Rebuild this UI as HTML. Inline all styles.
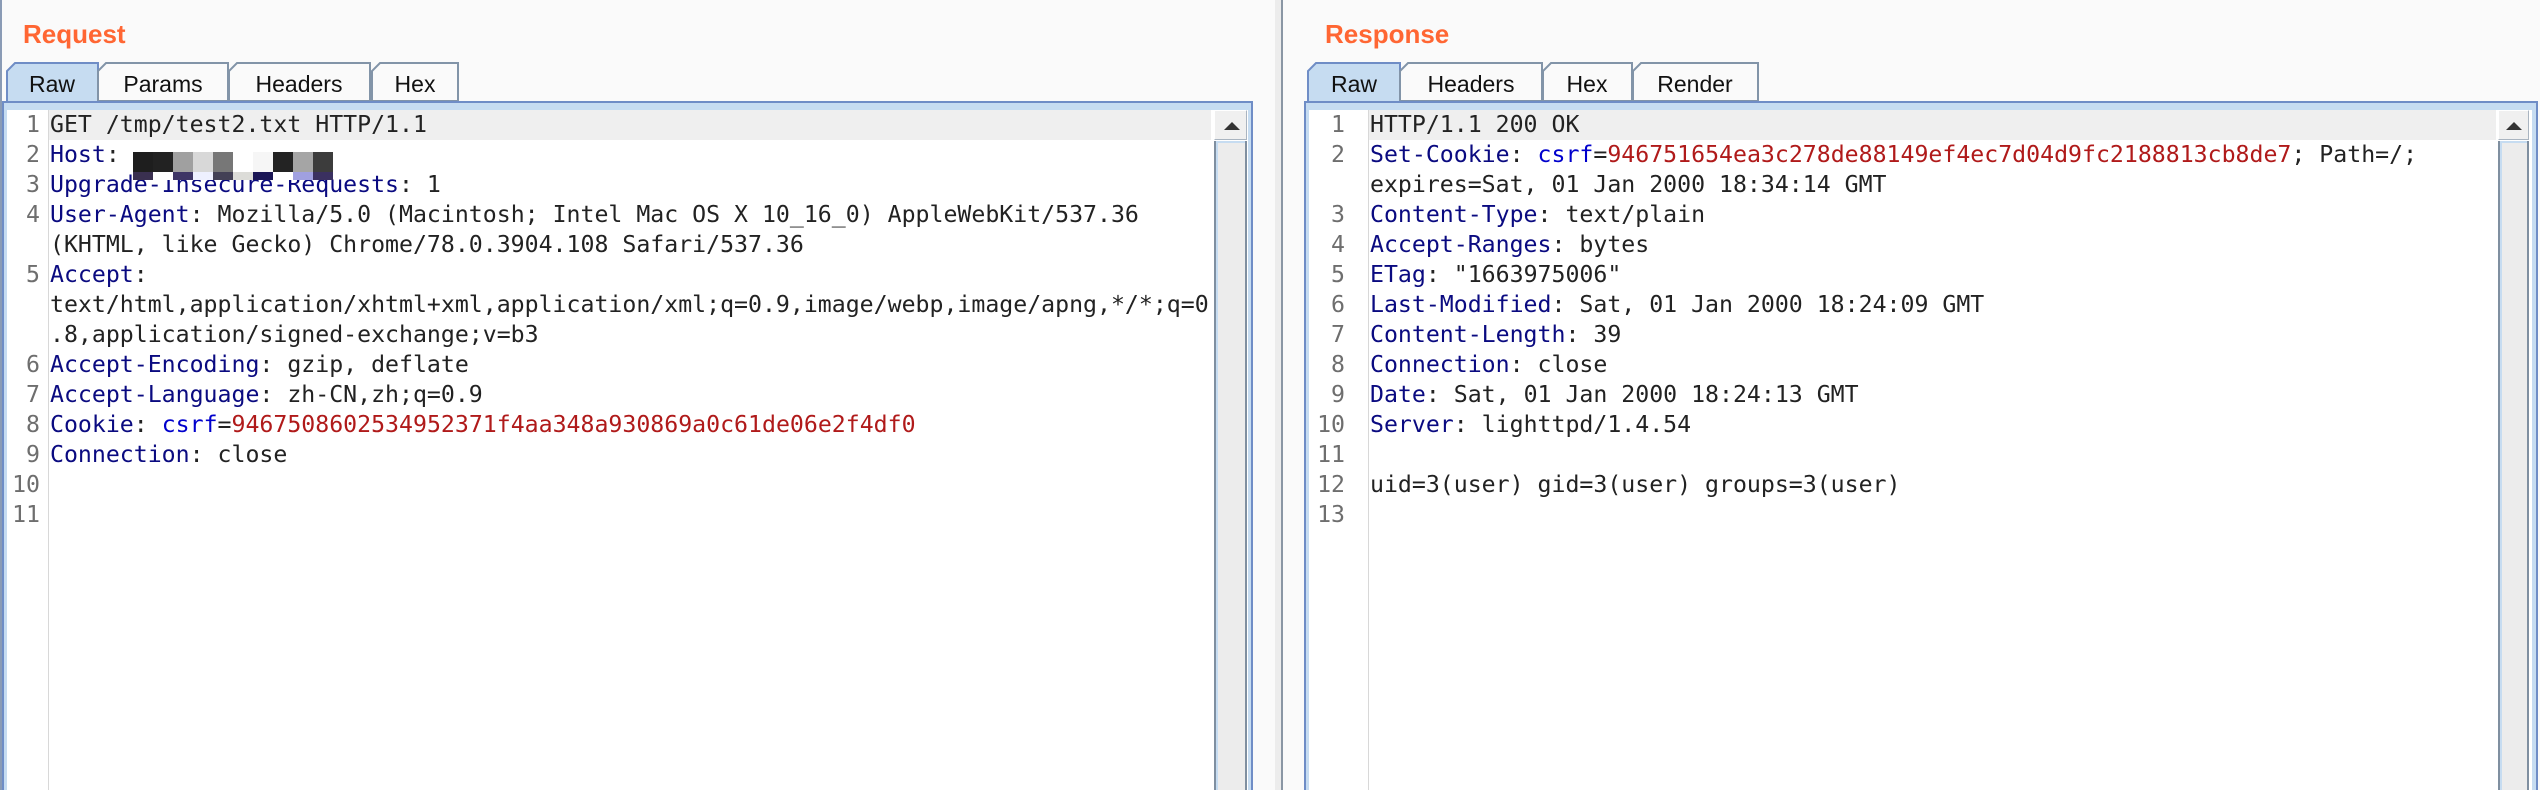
<!DOCTYPE html>
<html style="width:2540px;height:790px;overflow:hidden"><head><meta charset="utf-8">
<style>
*{margin:0;padding:0;box-sizing:border-box}
html,body{width:2540px;height:790px;overflow:hidden}
body{background:#fafafa;position:relative;font-family:"Liberation Sans",sans-serif}
.title{position:absolute;top:18px;font-weight:bold;font-size:26px;color:#ff6633;line-height:32px}
.tabs{position:absolute;left:0;top:0}
.tabt{font-family:"Liberation Sans",sans-serif;font-size:23px;fill:#111}
.panel{position:absolute;top:101px;height:689px;border:2px solid #6f8dc6;border-bottom:none;background:#c6dcf1;overflow:hidden}
.ed{position:absolute;top:7px;left:3px;bottom:0;background:#fff;overflow:hidden}
.gut{position:absolute;top:0;bottom:0;border-right:1px solid #d8d8d8}
.row{position:absolute;left:0;right:0;height:30px;line-height:30px;font-family:"DejaVu Sans Mono","Liberation Mono",monospace;font-size:23.2px;white-space:pre;color:#222}
.n{position:absolute;text-align:right;color:#6e6e6e}
.t{position:absolute}
.k{color:#0a0a80}.b{color:#0000cc}.r{color:#b01a1a}
.hl{background:#efefef}
.sb{position:absolute;top:0;bottom:0;width:33px}
.sb .up{position:absolute;left:0;top:0;width:33px;height:30px;background:#f0f0f0;border:1px solid #a9b4c0;border-top-color:#fff;border-left-color:#fff}
.sb .tri{position:absolute;left:9px;top:11px;width:0;height:0;border-left:8px solid transparent;border-right:8px solid transparent;border-bottom:8px solid #333}
.sb .tr{position:absolute;left:0;top:31px;bottom:0;width:33px;background:#ececec;border-left:2px solid #7f8fa0;border-right:2px solid #7f8fa0;box-shadow:inset 2px 2px 0 #c6dcf1}
</style></head><body>
<div style="position:absolute;left:0;top:0;width:2px;height:790px;background:#8a9bb5"></div>
<div style="position:absolute;left:1275px;top:0;width:6px;height:790px;background:#ececec"></div>
<div style="position:absolute;left:1281px;top:0;width:2px;height:790px;background:#8a96a4"></div>

<div class="title" style="left:23px">Request</div>
<div class="title" style="left:1325px">Response</div>

<svg class="tabs" width="2540" height="112">
<polygon points="7,111 7,71 15,63 98,63 98,111" fill="#c6dcf1" stroke="#6f8dc6" stroke-width="2"/>
<polygon points="98,101 98,71 106,63 228,63 228,101" fill="#fafafa" stroke="#8294a8" stroke-width="2"/>
<polygon points="229,101 229,71 237,63 370,63 370,101" fill="#fafafa" stroke="#8294a8" stroke-width="2"/>
<polygon points="372,101 372,71 380,63 458,63 458,101" fill="#fafafa" stroke="#8294a8" stroke-width="2"/>
<text class="tabt" x="52" y="92" text-anchor="middle">Raw</text>
<text class="tabt" x="163" y="92" text-anchor="middle">Params</text>
<text class="tabt" x="299" y="92" text-anchor="middle">Headers</text>
<text class="tabt" x="415" y="92" text-anchor="middle">Hex</text>

<polygon points="1308,111 1308,71 1316,63 1400,63 1400,111" fill="#c6dcf1" stroke="#6f8dc6" stroke-width="2"/>
<polygon points="1400,101 1400,71 1408,63 1542,63 1542,101" fill="#fafafa" stroke="#8294a8" stroke-width="2"/>
<polygon points="1543,101 1543,71 1551,63 1632,63 1632,101" fill="#fafafa" stroke="#8294a8" stroke-width="2"/>
<polygon points="1633,101 1633,71 1641,63 1758,63 1758,101" fill="#fafafa" stroke="#8294a8" stroke-width="2"/>
<text class="tabt" x="1354" y="92" text-anchor="middle">Raw</text>
<text class="tabt" x="1471" y="92" text-anchor="middle">Headers</text>
<text class="tabt" x="1587" y="92" text-anchor="middle">Hex</text>
<text class="tabt" x="1695" y="92" text-anchor="middle">Render</text>
</svg>

<div class="panel" style="left:2px;width:1251px">
 <div class="ed" style="right:3px">
  <div class="gut" style="left:0;width:42px"></div>
  <div class="row hl" style="top:0;left:42px;right:37px"></div>
  <div class="row" style="top:0"><span class="n" style="left:0;width:33px">1</span><span class="t" style="left:43px">GET /tmp/test2.txt HTTP/1.1</span></div>
  <div class="row" style="top:30px"><span class="n" style="left:0;width:33px">2</span><span class="t" style="left:43px"><span class="k">Host</span>:</span></div>
  <div class="row" style="top:60px"><span class="n" style="left:0;width:33px">3</span><span class="t" style="left:43px"><span class="k">Upgrade-Insecure-Requests</span>: 1</span></div>
  <div class="row" style="top:90px"><span class="n" style="left:0;width:33px">4</span><span class="t" style="left:43px"><span class="k">User-Agent</span>: Mozilla/5.0 (Macintosh; Intel Mac OS X 10_16_0) AppleWebKit/537.36</span></div>
  <div class="row" style="top:120px"><span class="t" style="left:43px">(KHTML, like Gecko) Chrome/78.0.3904.108 Safari/537.36</span></div>
  <div class="row" style="top:150px"><span class="n" style="left:0;width:33px">5</span><span class="t" style="left:43px"><span class="k">Accept</span>:</span></div>
  <div class="row" style="top:180px"><span class="t" style="left:43px">text/html,application/xhtml+xml,application/xml;q=0.9,image/webp,image/apng,*/*;q=0</span></div>
  <div class="row" style="top:210px"><span class="t" style="left:43px">.8,application/signed-exchange;v=b3</span></div>
  <div class="row" style="top:240px"><span class="n" style="left:0;width:33px">6</span><span class="t" style="left:43px"><span class="k">Accept-Encoding</span>: gzip, deflate</span></div>
  <div class="row" style="top:270px"><span class="n" style="left:0;width:33px">7</span><span class="t" style="left:43px"><span class="k">Accept-Language</span>: zh-CN,zh;q=0.9</span></div>
  <div class="row" style="top:300px"><span class="n" style="left:0;width:33px">8</span><span class="t" style="left:43px"><span class="k">Cookie</span>: <span class="b">csrf</span>=<span class="r">9467508602534952371f4aa348a930869a0c61de06e2f4df0</span></span></div>
  <div class="row" style="top:330px"><span class="n" style="left:0;width:33px">9</span><span class="t" style="left:43px"><span class="k">Connection</span>: close</span></div>
  <div class="row" style="top:360px"><span class="n" style="left:0;width:33px">10</span></div>
  <div class="row" style="top:390px"><span class="n" style="left:0;width:33px">11</span></div>
  <div style="position:absolute;top:42px;left:126px;height:20px;width:200px;display:flex">
   <i style="flex:1;background:#1e1e1e"></i><i style="flex:1;background:#222"></i><i style="flex:1;background:#a0a0a0"></i><i style="flex:1;background:#d8d8d8"></i><i style="flex:1;background:#777"></i><i style="flex:1;background:#fff"></i><i style="flex:1;background:#f6f6f6"></i><i style="flex:1;background:#232323"></i><i style="flex:1;background:#a5a5a5"></i><i style="flex:1;background:#3c3c3c"></i>
  </div>
  <div style="position:absolute;top:62px;left:126px;height:8px;width:200px;display:flex">
   <i style="flex:1;background:#3a3050"></i><i style="flex:1;background:#fff"></i><i style="flex:1;background:#3e3565"></i><i style="flex:1;background:#eef0ff"></i><i style="flex:1;background:#434055"></i><i style="flex:1;background:#dcdcd8"></i><i style="flex:1;background:#1a1555"></i><i style="flex:1;background:#fff"></i><i style="flex:1;background:#a0a0e0"></i><i style="flex:1;background:#3a3060"></i>
  </div>
  <div class="sb" style="left:1207px"><div class="up"><div class="tri"></div></div><div class="tr"></div></div>
 </div>
</div>

<div class="panel" style="left:1304px;width:1234px">
 <div class="ed" style="right:4px">
  <div class="gut" style="left:0;width:60px"></div>
  <div class="row hl" style="top:0;left:60px;right:36px"></div>
  <div class="row" style="top:0"><span class="n" style="left:0;width:36px">1</span><span class="t" style="left:61px">HTTP/1.1 200 OK</span></div>
  <div class="row" style="top:30px"><span class="n" style="left:0;width:36px">2</span><span class="t" style="left:61px"><span class="k">Set-Cookie</span>: <span class="b">csrf</span>=<span class="r">946751654ea3c278de88149ef4ec7d04d9fc2188813cb8de7</span>; Path=/;</span></div>
  <div class="row" style="top:60px"><span class="t" style="left:61px">expires=Sat, 01 Jan 2000 18:34:14 GMT</span></div>
  <div class="row" style="top:90px"><span class="n" style="left:0;width:36px">3</span><span class="t" style="left:61px"><span class="k">Content-Type</span>: text/plain</span></div>
  <div class="row" style="top:120px"><span class="n" style="left:0;width:36px">4</span><span class="t" style="left:61px"><span class="k">Accept-Ranges</span>: bytes</span></div>
  <div class="row" style="top:150px"><span class="n" style="left:0;width:36px">5</span><span class="t" style="left:61px"><span class="k">ETag</span>: "1663975006"</span></div>
  <div class="row" style="top:180px"><span class="n" style="left:0;width:36px">6</span><span class="t" style="left:61px"><span class="k">Last-Modified</span>: Sat, 01 Jan 2000 18:24:09 GMT</span></div>
  <div class="row" style="top:210px"><span class="n" style="left:0;width:36px">7</span><span class="t" style="left:61px"><span class="k">Content-Length</span>: 39</span></div>
  <div class="row" style="top:240px"><span class="n" style="left:0;width:36px">8</span><span class="t" style="left:61px"><span class="k">Connection</span>: close</span></div>
  <div class="row" style="top:270px"><span class="n" style="left:0;width:36px">9</span><span class="t" style="left:61px"><span class="k">Date</span>: Sat, 01 Jan 2000 18:24:13 GMT</span></div>
  <div class="row" style="top:300px"><span class="n" style="left:0;width:36px">10</span><span class="t" style="left:61px"><span class="k">Server</span>: lighttpd/1.4.54</span></div>
  <div class="row" style="top:330px"><span class="n" style="left:0;width:36px">11</span></div>
  <div class="row" style="top:360px"><span class="n" style="left:0;width:36px">12</span><span class="t" style="left:61px">uid=3(user) gid=3(user) groups=3(user)</span></div>
  <div class="row" style="top:390px"><span class="n" style="left:0;width:36px">13</span></div>
  <div class="sb" style="left:1189px;width:31px"><div class="up" style="width:31px"><div class="tri" style="left:7px"></div></div><div class="tr" style="width:31px"></div></div>
 </div>
</div>
</body></html>
